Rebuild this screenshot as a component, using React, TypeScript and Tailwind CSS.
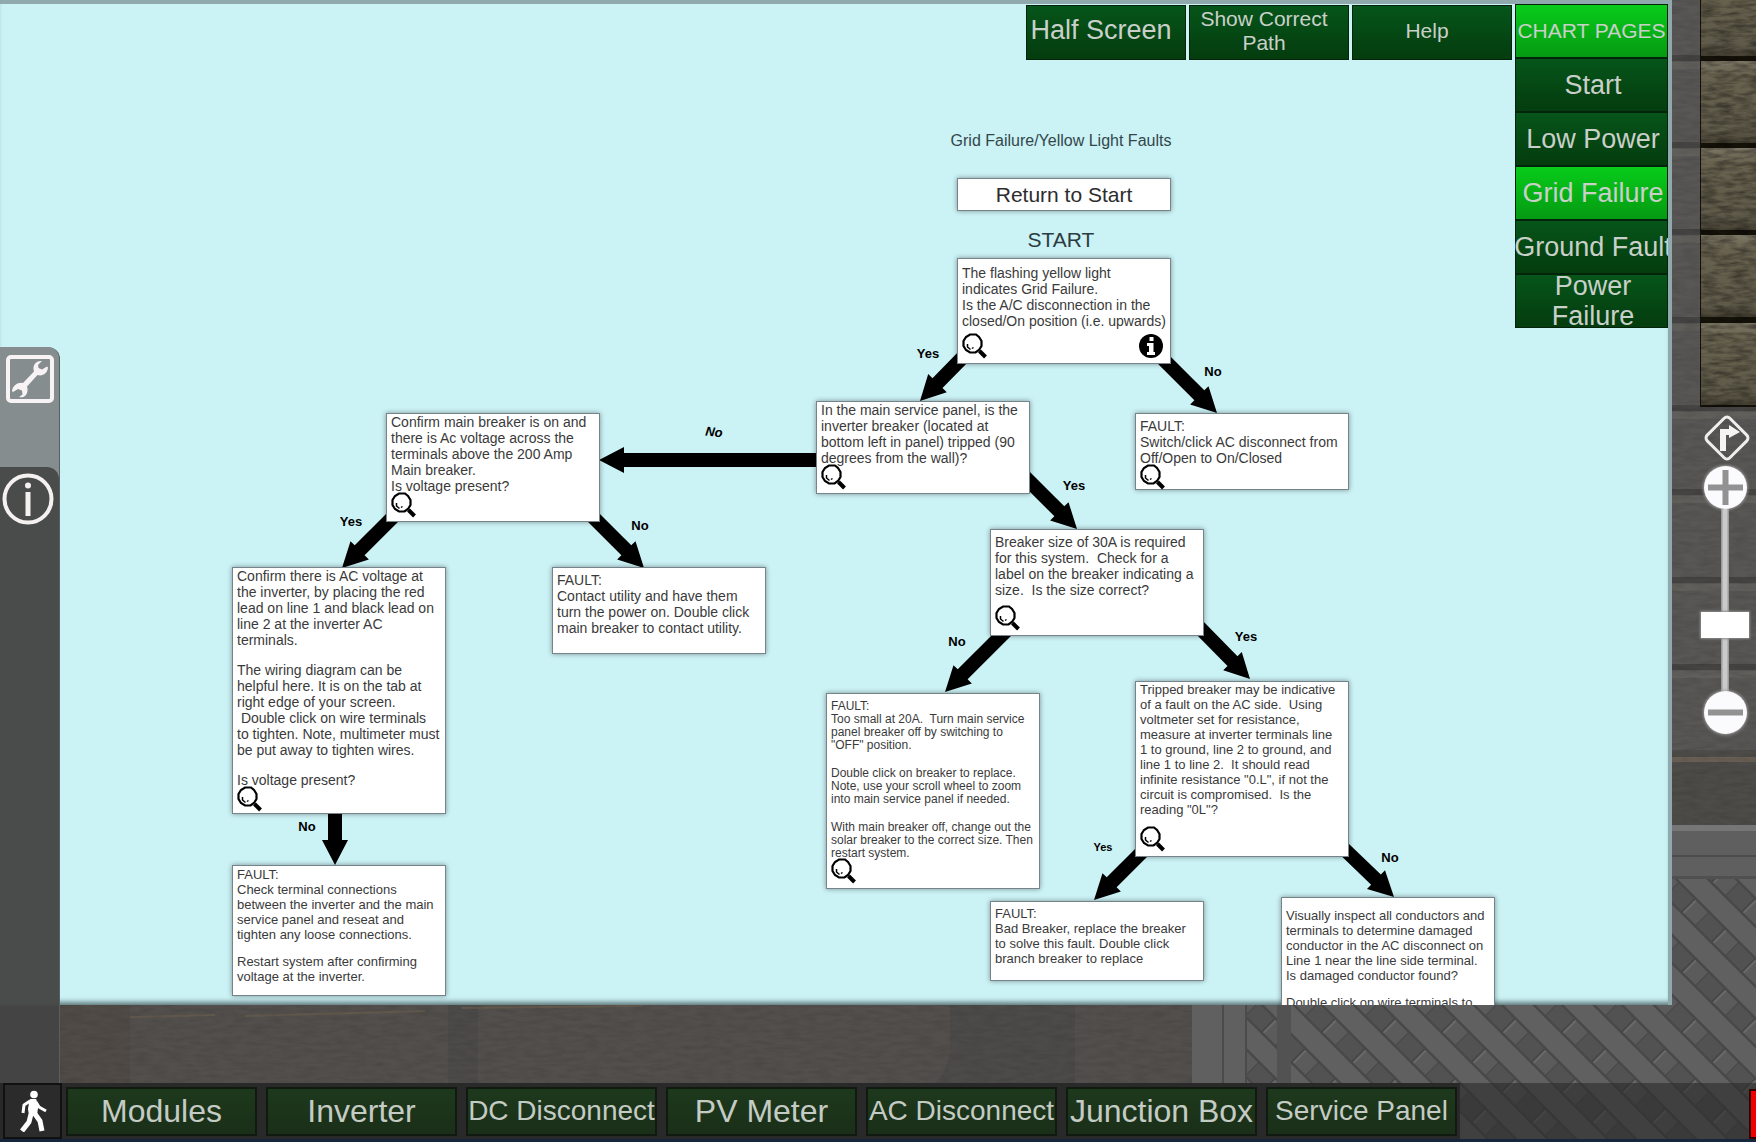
import React from "react";

type ChartNode = {
  id: string;
  x: number;
  y: number;
  height: number;
  text: string;
  paragraphs: string[];
  zoom?: boolean;
  info?: boolean;
};

const LARGE = "gap-[14px] text-[14px] leading-[16px]";
const MEDIUM = "gap-[12px] text-[13px] leading-[15px]";
const SMALL = "gap-[15px] text-[12px] leading-[13px]";

const nodes: ChartNode[] = [
  {
    id: "disconnect-position",
    x: 957, y: 258, height: 106, text: `pt-1.5 ${LARGE}`, zoom: true, info: true,
    paragraphs: ["The flashing yellow light\nindicates Grid Failure.\nIs the A/C disconnection in the\nclosed/On position (i.e. upwards)"],
  },
  {
    id: "inverter-breaker",
    x: 816, y: 401, height: 93, text: LARGE, zoom: true,
    paragraphs: ["In the main service panel, is the\ninverter breaker (located at\nbottom left in panel) tripped (90\ndegrees from the wall)?"],
  },
  {
    id: "fault-disconnect",
    x: 1135, y: 413, height: 77, text: `pt-1 ${LARGE}`, zoom: true,
    paragraphs: ["FAULT:\nSwitch/click AC disconnect from\nOff/Open to On/Closed"],
  },
  {
    id: "main-breaker",
    x: 386, y: 413, height: 109, text: LARGE, zoom: true,
    paragraphs: ["Confirm main breaker is on and\nthere is Ac voltage across the\nterminals above the 200 Amp\nMain breaker.\nIs voltage present?"],
  },
  {
    id: "inverter-voltage",
    x: 232, y: 567, height: 247, text: LARGE, zoom: true,
    paragraphs: [
      "Confirm there is AC voltage at\nthe inverter, by placing the red\nlead on line 1 and black lead on\nline 2 at the inverter AC\nterminals.",
      "The wiring diagram can be\nhelpful here. It is on the tab at\nright edge of your screen.\n Double click on wire terminals\nto tighten. Note, multimeter must\nbe put away to tighten wires.",
      "Is voltage present?",
    ],
  },
  {
    id: "fault-utility",
    x: 552, y: 567, height: 87, text: `pt-1 ${LARGE}`,
    paragraphs: ["FAULT:\nContact utility and have them\nturn the power on. Double click\nmain breaker to contact utility."],
  },
  {
    id: "fault-terminals",
    x: 232, y: 865, height: 131, text: `pt-px ${MEDIUM}`,
    paragraphs: [
      "FAULT:\nCheck terminal connections\nbetween the inverter and the main\nservice panel and reseat and\ntighten any loose connections.",
      "Restart system after confirming\nvoltage at the inverter.",
    ],
  },
  {
    id: "breaker-size",
    x: 990, y: 529, height: 107, text: `pt-1 ${LARGE}`, zoom: true,
    paragraphs: ["Breaker size of 30A is required\nfor this system.  Check for a\nlabel on the breaker indicating a\nsize.  Is the size correct?"],
  },
  {
    id: "fault-small-breaker",
    x: 826, y: 693, height: 196, text: `pt-1.5 ${SMALL}`, zoom: true,
    paragraphs: [
      "FAULT:\nToo small at 20A.  Turn main service\npanel breaker off by switching to\n\"OFF\" position.",
      "Double click on breaker to replace.\nNote, use your scroll wheel to zoom\ninto main service panel if needed.",
      "With main breaker off, change out the\nsolar breaker to the correct size. Then\nrestart system.",
    ],
  },
  {
    id: "resistance",
    x: 1135, y: 681, height: 176, text: MEDIUM, zoom: true,
    paragraphs: [
      "Tripped breaker may be indicative\nof a fault on the AC side.  Using\nvoltmeter set for resistance,\nmeasure at inverter terminals line\n1 to ground, line 2 to ground, and\nline 1 to line 2.  It should read\ninfinite resistance \"0.L\", if not the\ncircuit is compromised.  Is the\nreading \"0L\"?",
    ],
  },
  {
    id: "fault-bad-breaker",
    x: 990, y: 901, height: 80, text: `pt-1 ${MEDIUM}`,
    paragraphs: ["FAULT:\nBad Breaker, replace the breaker\nto solve this fault. Double click\nbranch breaker to replace"],
  },
  {
    id: "inspect-conductors",
    x: 1281, y: 897, height: 150, text: `pt-2.5 ${MEDIUM}`,
    paragraphs: [
      "Visually inspect all conductors and\nterminals to determine damaged\nconductor in the AC disconnect on\nLine 1 near the line side terminal.\nIs damaged conductor found?",
      "Double click on wire terminals to",
    ],
  },
];

const arrows = [
  [968, 352, 920, 401],
  [1158, 354, 1217, 413],
  [830, 460, 599, 460],
  [1018, 470, 1077, 529],
  [396, 514, 342, 568],
  [590, 514, 644, 568],
  [335, 800, 335, 865],
  [1010, 627, 945, 692],
  [1196, 624, 1250, 679],
  [1146, 848, 1094, 900],
  [1340, 845, 1394, 897],
];

const labels = [
  { x: 928, y: 353, text: "Yes" },
  { x: 1213, y: 371, text: "No" },
  { x: 1074, y: 485, text: "Yes" },
  { x: 714, y: 432, text: "No", slanted: true },
  { x: 351, y: 521, text: "Yes" },
  { x: 640, y: 525, text: "No" },
  { x: 307, y: 826, text: "No" },
  { x: 957, y: 641, text: "No" },
  { x: 1246, y: 636, text: "Yes" },
  { x: 1103, y: 847, text: "Yes", small: true },
  { x: 1390, y: 857, text: "No" },
];

const chartPages = ["Start", "Low Power", "Grid Failure", "Ground Fault", "Power Failure"];

const locations = [
  { name: "Modules", size: "text-[32px]" },
  { name: "Inverter", size: "text-[32px]" },
  { name: "DC Disconnect", size: "text-[28px]" },
  { name: "PV Meter", size: "text-[32px]" },
  { name: "AC Disconnect", size: "text-[28px]" },
  { name: "Junction Box", size: "text-[32px]" },
  { name: "Service Panel", size: "text-[28px]" },
];

function Arrow({ points }: { points: number[] }) {
  const [x1, y1, x2, y2] = points;
  const length = Math.hypot(x2 - x1, y2 - y1);
  const angle = (Math.atan2(y2 - y1, x2 - x1) * 180) / Math.PI;
  const base = length - 25;
  return (
    <path
      transform={`translate(${x1} ${y1}) rotate(${angle})`}
      d={`M0 -7H${base}V-13L${length} 0L${base} 13V7H0Z`}
    />
  );
}

function Magnifier() {
  return (
    <svg viewBox="0 0 25 26" className="h-[26px] w-[25px]" fill="none" stroke="#000" aria-hidden="true">
      <path strokeWidth="2.2" fill="#fff" d="M8 1.5h6l3 2.5 2.5 4v5L17 17l-3.500 2.500H8L4 17 1.500 13V8L4 4z" />
      <path strokeWidth="1.500" d="M5.500 11v3l3 2.500M10 15.500l1.500-1" />
      <path strokeWidth="4" d="M17.500 18l6 6" />
    </svg>
  );
}

function InfoMark() {
  return (
    <svg viewBox="0 0 26 26" className="h-[26px] w-[26px]" aria-hidden="true">
      <circle cx="13" cy="13" r="12" fill="#000" />
      <path fill="#fff" d="M11.500 4h4v4h-4zM9 10h6.500v9H17v3H9v-3h2v-6H9z" />
    </svg>
  );
}

function NodeCard({ node }: { node: ChartNode }) {
  return (
    <article
      className="absolute flex w-[214px] flex-col justify-between border border-[#77838a] bg-white pb-1 pl-1 pr-1.5 shadow-[0_0_5px_rgba(0,0,0,0.4)]"
      style={{ left: node.x, top: node.y, height: node.height }}
    >
      <div className={`flex flex-col whitespace-pre text-[#3a3a3a] ${node.text}`}>
        {node.paragraphs.map((p) => (
          <p key={p}>{p}</p>
        ))}
      </div>
      {node.zoom && (
        <div className="flex h-[24px] items-end justify-between">
          <button type="button" aria-label="Zoom to location"><Magnifier /></button>
          {node.info && <button type="button" aria-label="More information"><InfoMark /></button>}
        </div>
      )}
    </article>
  );
}

function Scene() {
  const seams = [58, 145, 232, 320];
  const dimSeams = [58, 145, 232, 320, 408, 492, 580, 667];
  return (
    <svg
      className="absolute inset-0 h-full w-full"
      viewBox="0 0 1756 1142"
      preserveAspectRatio="xMaxYMax slice"
      aria-hidden="true"
    >
      <defs>
        <filter id="grain" x="0" y="0" width="100%" height="100%">
          <feTurbulence type="fractalNoise" baseFrequency="0.060 0.240" numOctaves="3" seed="4" />
          <feColorMatrix values="0 0 0 0 0  0 0 0 0 0  0 0 0 0 0  1.600 0 0 0 -0.550" />
        </filter>
        <linearGradient id="plank" x1="0" y1="0" x2="0" y2="1">
          <stop offset="0" stopColor="#7c7664" />
          <stop offset="0.180" stopColor="#68624f" />
          <stop offset="0.850" stopColor="#5f5a49" />
          <stop offset="1" stopColor="#464133" />
        </linearGradient>
        <pattern id="lattice" width="60" height="60" patternUnits="userSpaceOnUse" x="1680" y="897">
          <rect width="60" height="60" fill="#525252" />
          <path d="M-30 60L60 -30M-30 120L120 -30" stroke="#474747" strokeWidth="21" />
          <path d="M-30 60L60 -30M-30 120L120 -30" stroke="#6a6a6a" strokeWidth="17" />
          <path d="M-29 61L61 -29M-29 121L121 -29" stroke="#5b5b5b" strokeWidth="16" />
          <path d="M-30 -60L90 60M-60 -30L90 120" stroke="#484848" strokeWidth="25" />
          <path d="M-30 -60L90 60M-60 -30L90 120" stroke="#606060" strokeWidth="20" />
        </pattern>
      </defs>
      <rect width="1756" height="1142" fill="#504e4b" />
      <rect width="1756" height="6" fill="#8a8a88" />
      <rect x="1660" width="96" height="820" fill="#585755" />
      {dimSeams.map((y) => (
        <g key={y}>
          <rect x="1660" y={y - 3} width="96" height="6" fill="#454443" />
          <rect x="1660" y={y + 4} width="96" height="7" fill="#605f5b" />
        </g>
      ))}
      <rect x="1660" y="750" width="96" height="76" fill="#4e4c48" />
      <rect x="1660" y="757" width="96" height="5" fill="#6a6056" />
      <rect x="1660" width="96" height="826" filter="url(#grain)" opacity="0.120" />
      <rect x="1700" width="56" height="407" fill="#151209" />
      {[-29, ...seams].map((y) => (
        <rect key={y} x="1701" y={y + 3} width="55" height="82" fill="url(#plank)" />
      ))}
      <rect x="1700" width="56" height="407" filter="url(#grain)" opacity="0.500" />
      <rect x="60" y="1000" width="1132" height="142" fill="#524f4c" />
      <path d="M60 1005h70v78H60z" fill="#504b47" />
      <path d="M448 1005h30v78h-30zM950 1005h125v78H935q15-12 15-40z" fill="#4c4b4a" />
      <path d="M130 1017l85-2M245 1016l180-5M462 1008l180-2" stroke="#62594d" strokeWidth="2" />
      <rect x="60" y="1000" width="1132" height="83" filter="url(#grain)" opacity="0.100" />
      <rect x="1192" y="825" width="564" height="317" fill="url(#lattice)" />
      <rect x="1192" y="825" width="564" height="54" fill="#5f5f5f" />
      <rect x="1192" y="825" width="564" height="6" fill="#767676" />
      <rect x="1192" y="855" width="564" height="2" fill="#4c4c4c" />
      <rect x="1192" y="876" width="564" height="3" fill="#505050" />
      <rect x="1192" y="1000" width="54" height="142" fill="#606060" />
      <rect x="1222" y="1000" width="2" height="142" fill="#4b4b4b" />
      <rect x="1245" y="1000" width="2" height="142" fill="#4b4b4b" />
      <rect x="1277" y="1000" width="14" height="142" fill="#525252" />
    </svg>
  );
}

function Sidebar() {
  return (
    <aside className="relative z-10 mt-[347px] flex w-[60px] shrink-0 flex-col rounded-tr-[12px] border-r border-[#55605f] bg-[#868d8e]">
      <button type="button" aria-label="Tools" className="flex h-[120px] justify-center pt-2">
        <svg viewBox="0 0 48 48" className="h-12 w-12" aria-hidden="true">
          <rect x="2" y="2" width="44" height="44" rx="3" fill="none" stroke="#f7f3f5" strokeWidth="4" />
          <path
            fill="#f7f3f5"
            d="M36 6c-5-.500-9 3-8.500 8.500l.500 2L17 28c-5-1-10 2-11 8l1 1 5-3 4 1.500.500 4L13 42c5 1.500 9-2.500 8.500-8l-.500-2.500L31.500 20c5 1.500 10-1.500 10.500-7.500l-1-1-5 3-3.500-1.500-.500-3z"
          />
        </svg>
      </button>
      <button
        type="button"
        aria-label="Information"
        className="flex flex-1 justify-center rounded-tr-[12px] bg-[linear-gradient(#4a4c4b_536px,#444444_540px)] pr-1 pt-1.5"
      >
        <svg viewBox="0 0 52 52" className="h-[52px] w-[52px]" aria-hidden="true">
          <circle cx="26" cy="26" r="23.500" fill="none" stroke="#f5f1f1" strokeWidth="4" />
          <circle cx="26" cy="12.500" r="3" fill="#f5f1f1" />
          <rect x="23.500" y="19" width="5" height="24" fill="#f5f1f1" />
        </svg>
      </button>
    </aside>
  );
}

const greenButton =
  "flex items-center justify-center border border-[#03240a] text-center text-[#c9d0c9]";
const topButton =
  "mt-px h-[55px] w-[160px] bg-linear-to-b from-[#06551a] to-[#043c0e] pb-1 pr-2.5";

function ChartPanel() {
  return (
    <main className="relative -ml-[60px] mb-[78px] flex-1 overflow-hidden border-r-4 border-t-4 border-[#8fa9ac] bg-[#cbf2f5] shadow-[inset_0_-6px_5px_-3px_rgba(60,80,84,0.75)]">
      <div className="absolute -top-1 left-0">
        <svg className="absolute left-0 top-0 h-[1010px] w-[1600px]" aria-hidden="true">
          {arrows.map((points) => (
            <Arrow key={points.join()} points={points} />
          ))}
        </svg>
        <h1 className="absolute left-[1061px] top-[131px] -translate-x-1/2 whitespace-nowrap text-[16px] leading-[20px] text-[#33474b]">
          Grid Failure/Yellow Light Faults
        </h1>
        <button
          type="button"
          className="absolute left-[957px] top-[178px] h-[33px] w-[214px] border border-[#77838a] bg-white text-[21px] leading-[30px] text-[#2c2c2c] shadow-[0_0_5px_rgba(0,0,0,0.4)]"
        >
          Return to Start
        </button>
        <h2 className="absolute left-[1061px] top-[228px] -translate-x-1/2 text-[21px] leading-[24px] text-[#2b3c40]">
          START
        </h2>
        {nodes.map((node) => (
          <NodeCard key={node.id} node={node} />
        ))}
        {labels.map((l) => (
          <span
            key={`${l.x}-${l.y}`}
            className={`absolute -translate-x-1/2 -translate-y-1/2 leading-none text-black ${
              l.small ? "text-[11px] font-bold" : l.slanted ? "rotate-6 text-[13px] font-bold italic" : "text-[13px] font-bold"
            }`}
            style={{ left: l.x, top: l.y }}
          >
            {l.text}
          </span>
        ))}
      </div>
      <nav aria-label="Chart" className="absolute right-0 top-0 flex items-start gap-[3px]">
        <button type="button" className={`${greenButton} ${topButton} whitespace-nowrap text-[27px]`}>
          Half Screen
        </button>
        <button type="button" className={`${greenButton} ${topButton} text-[21px] leading-[24px]`}>
          Show Correct Path
        </button>
        <button type="button" className={`${greenButton} ${topButton} text-[21px]`}>
          Help
        </button>
        <div className="flex w-[153px] flex-col">
          <h2 className={`${greenButton} h-[54px] whitespace-nowrap bg-linear-to-b from-[#08cc1a] to-[#059a12] text-[21px]`}>
            CHART PAGES
          </h2>
          {chartPages.map((page) => (
            <button
              key={page}
              type="button"
              className={`${greenButton} h-[54px] bg-linear-to-b pl-[3px] text-[27px] leading-[30px] ${
                page === "Power Failure" ? "" : "whitespace-nowrap"
              } ${page === "Grid Failure" ? "from-[#08cc1a] to-[#059a12]" : "from-[#06551a] to-[#043c0e]"}`}
            >
              {page}
            </button>
          ))}
        </div>
      </nav>
    </main>
  );
}

function ZoomControls() {
  const round =
    "h-[43px] w-[43px] rounded-full bg-[#fbfafd] shadow-[0_0_3px_1px_rgba(160,160,160,0.9)]";
  return (
    <aside className="relative flex w-[84px] shrink-0 flex-col items-center pl-[22px] pt-[413px]">
      <button type="button" aria-label="Turn right" className="mb-[3px] ml-1">
        <svg viewBox="0 0 50 50" className="h-[50px] w-[50px]" aria-hidden="true">
          <rect x="9" y="9" width="32" height="32" rx="4" transform="rotate(45 25 25)" fill="none" stroke="#eeeeee" strokeWidth="3" />
          <path fill="#f4f4f2" d="M18 38V16h9v-4l11 7-11 6v-3h-3v16z" />
        </svg>
      </button>
      <button type="button" aria-label="Zoom in" className={round}>
        <svg viewBox="0 0 43 43" aria-hidden="true">
          <path d="M4 21.500h35M21.500 4v35" stroke="#929292" strokeWidth="6" />
        </svg>
      </button>
      <input
        type="range"
        aria-label="Zoom"
        defaultValue={34}
        className="h-[182px] w-[48px] appearance-none bg-[linear-gradient(to_right,#9a9a9a_1px,#cacaca_2px,#cacaca_6px,#9a9a9a_7px)] bg-[length:8px_100%] bg-center bg-no-repeat [direction:rtl] [writing-mode:vertical-lr] [&::-webkit-slider-thumb]:h-[26px] [&::-webkit-slider-thumb]:w-[48px] [&::-webkit-slider-thumb]:appearance-none [&::-webkit-slider-thumb]:bg-white [&::-webkit-slider-thumb]:shadow-[0_0_2px_1px_#8d8d8d]"
      />
      <button type="button" aria-label="Zoom out" className={round}>
        <svg viewBox="0 0 43 43" aria-hidden="true">
          <path d="M4 21.500h35" stroke="#929292" strokeWidth="6" />
        </svg>
      </button>
    </aside>
  );
}

function BottomBar() {
  return (
    <footer className="relative flex items-stretch justify-between border-b-[3px] border-[#16263c] bg-[#2c2c2c]/60">
      <nav aria-label="Locations" className="flex items-center bg-[#292929] pr-[3px]">
        <button type="button" aria-label="Walk" className="ml-[3px] flex h-[56px] w-[59px] items-center justify-center border-2 border-[#111] bg-[#2b2b2b]">
          <svg viewBox="0 0 30 42" className="h-[42px] w-[30px]" fill="none" stroke="#fff" strokeLinejoin="round" aria-hidden="true">
            <circle cx="16" cy="4.500" r="3.800" fill="#fff" stroke="none" />
            <path d="M12.500 10h5l1.500 8-1 7h-6l-1-6z" fill="#fff" strokeWidth="2" />
            <path d="M12 11l-6 4-1 8M18 12l3 5 7 4" strokeWidth="3" />
            <path d="M13 24l-2 8-7 9M17 24l5 7 2 10" strokeWidth="5" />
          </svg>
        </button>
        <div className="flex gap-[9px] pl-1">
          {locations.map(({ name, size }) => (
            <button
              key={name}
              type="button"
              className={`flex h-[49px] w-[191px] items-center justify-center whitespace-nowrap border-2 border-[#101a10] bg-linear-to-b from-[#1d391c] to-[#1a2f18] text-[#c4cbc4] ${size}`}
            >
              {name}
            </button>
          ))}
        </div>
      </nav>
      <button type="button" aria-label="Exit" className="mt-1.5 w-[7px] border-2 border-r-0 border-[#300] bg-[#f00000]" />
    </footer>
  );
}

export default function App() {
  return (
    <div className="relative flex min-h-screen flex-col overflow-hidden bg-[#54524f] font-['Liberation_Sans',Arial,sans-serif]">
      <Scene />
      <div className="relative flex flex-1">
        <Sidebar />
        <ChartPanel />
        <ZoomControls />
      </div>
      <BottomBar />
    </div>
  );
}
